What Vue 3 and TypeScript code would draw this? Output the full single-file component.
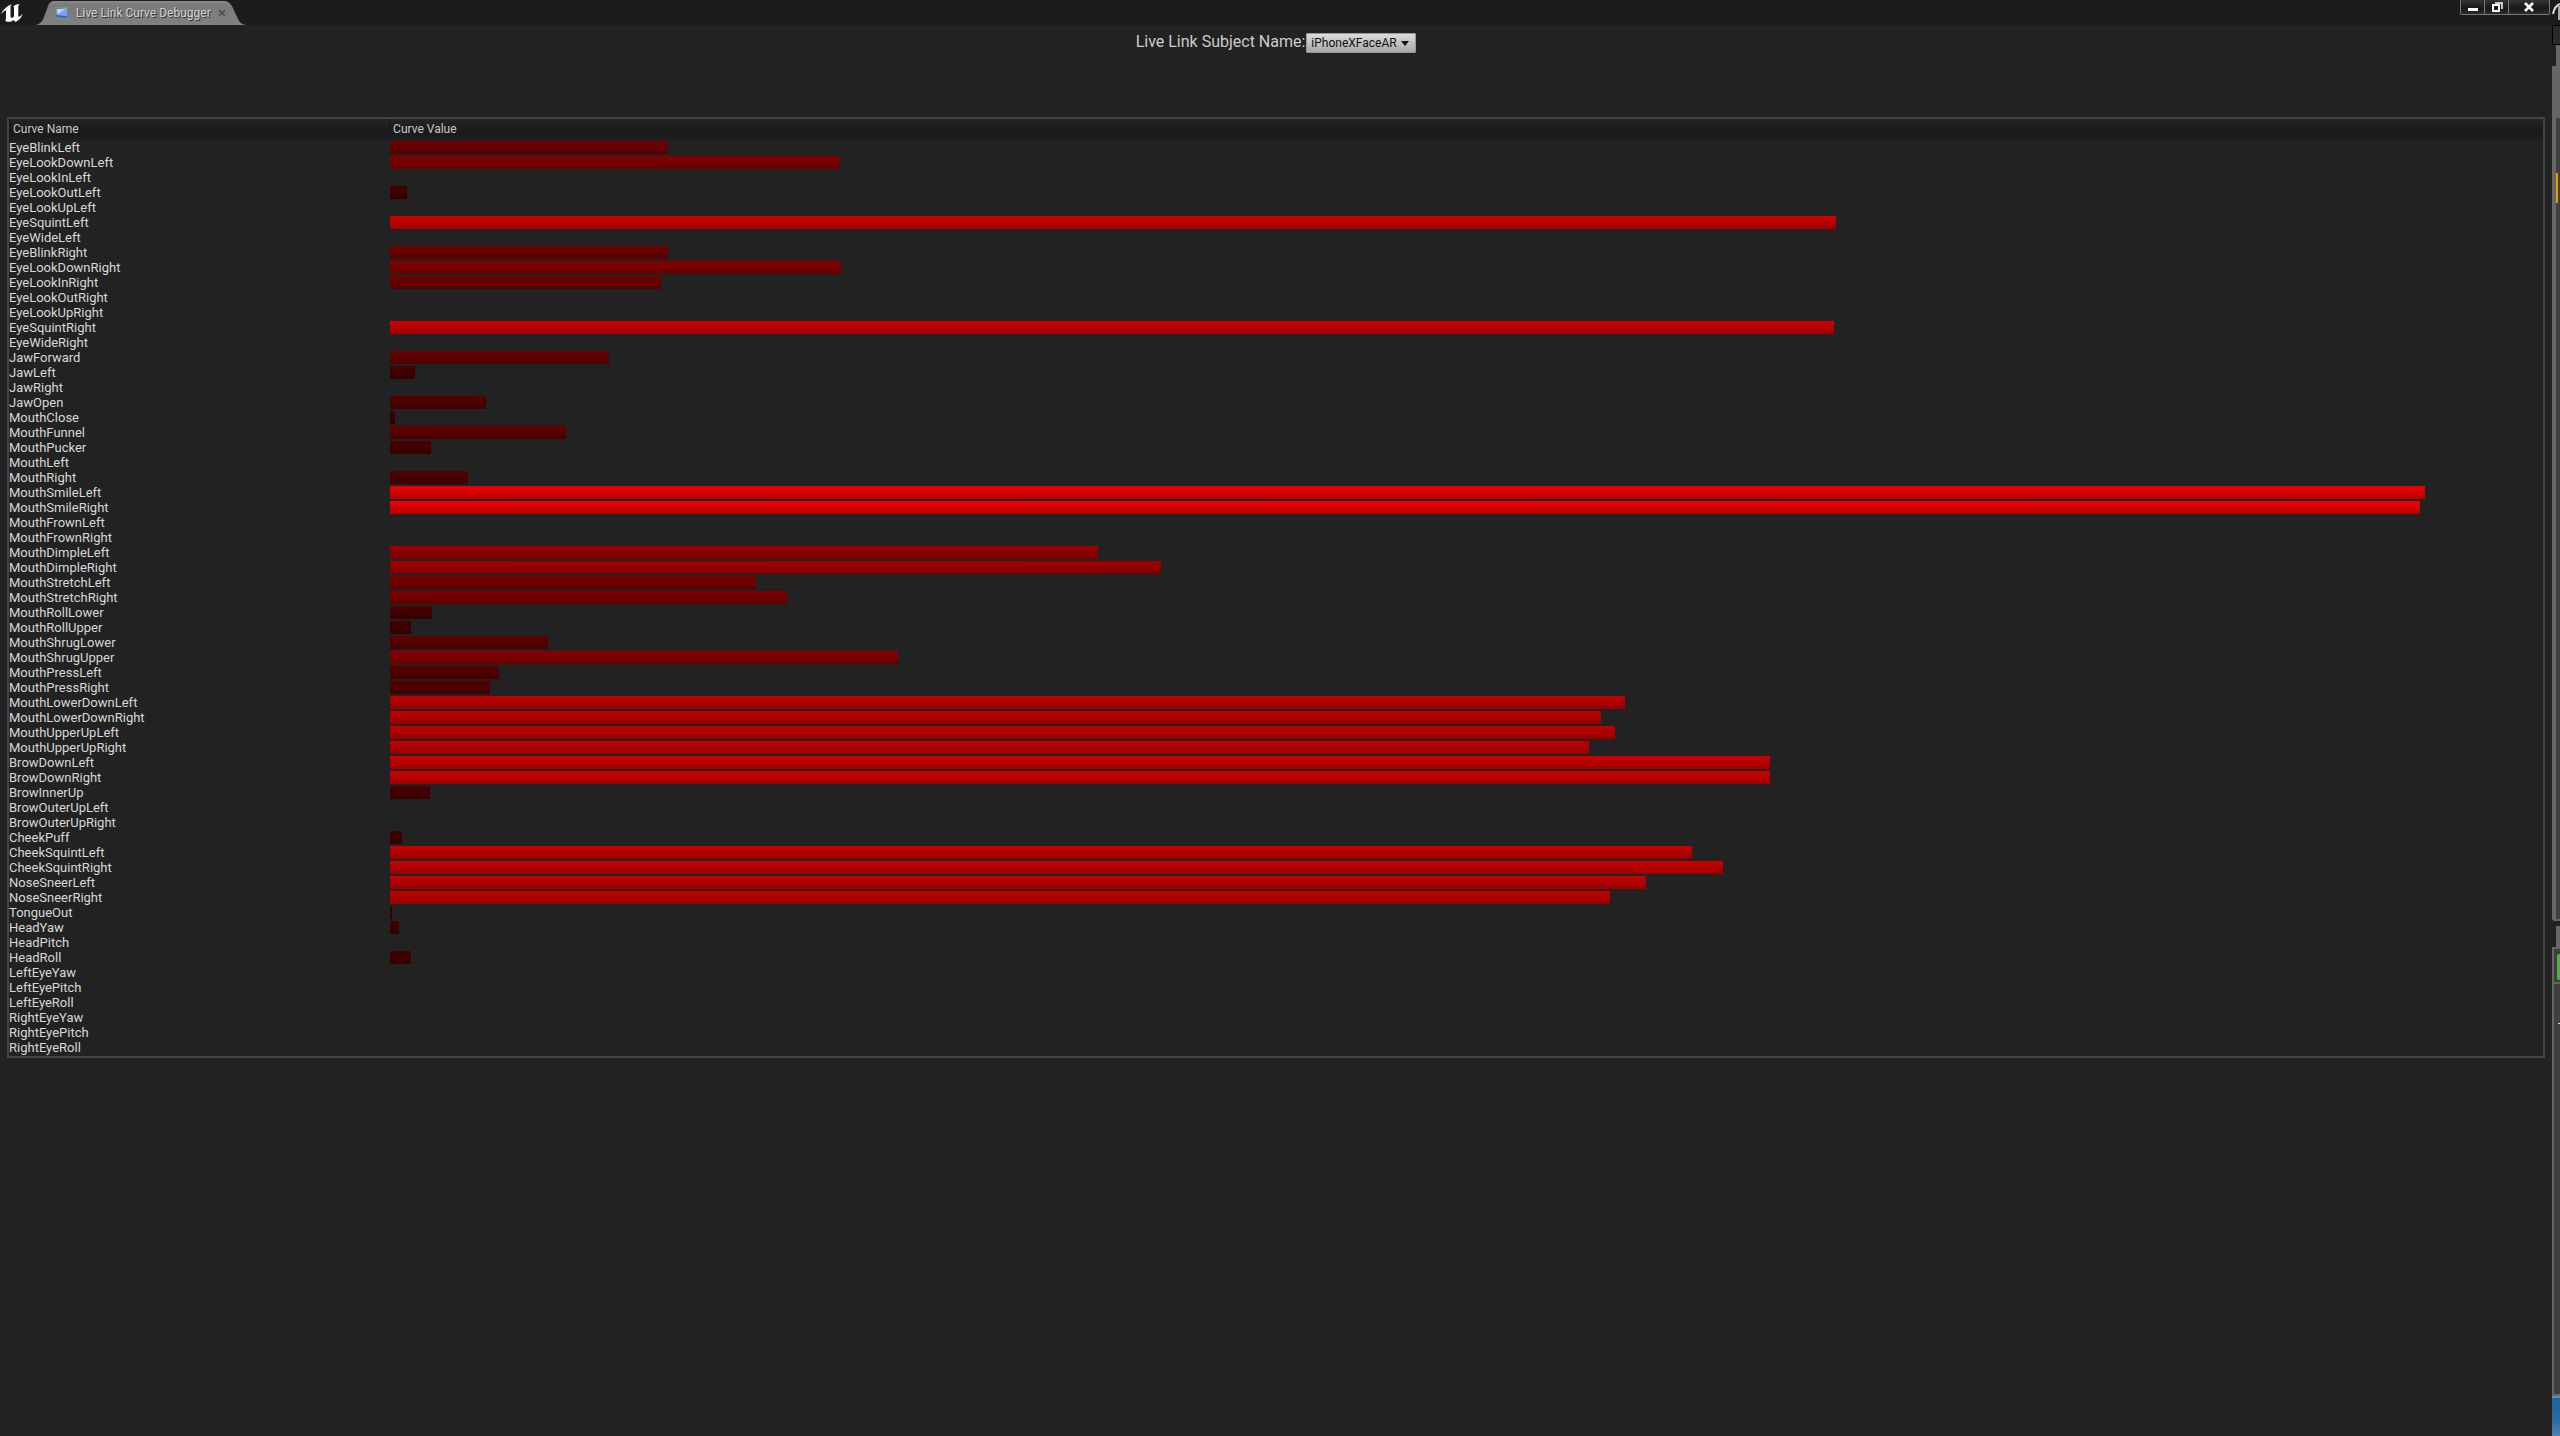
<script setup lang="ts">
import { ref } from 'vue'

interface Curve {
  name: string
  value: number
}

const subjects: string[] = ['iPhoneXFaceAR']
const subject = ref<string>(subjects[0])

const curves: Curve[] = [
  { name: 'EyeBlinkLeft', value: 0.1291 },
  { name: 'EyeLookDownLeft', value: 0.209 },
  { name: 'EyeLookInLeft', value: 0 },
  { name: 'EyeLookOutLeft', value: 0.0079 },
  { name: 'EyeLookUpLeft', value: 0 },
  { name: 'EyeSquintLeft', value: 0.6716 },
  { name: 'EyeWideLeft', value: 0 },
  { name: 'EyeBlinkRight', value: 0.1291 },
  { name: 'EyeLookDownRight', value: 0.2095 },
  { name: 'EyeLookInRight', value: 0.1259 },
  { name: 'EyeLookOutRight', value: 0 },
  { name: 'EyeLookUpRight', value: 0 },
  { name: 'EyeSquintRight', value: 0.6707 },
  { name: 'EyeWideRight', value: 0 },
  { name: 'JawForward', value: 0.1017 },
  { name: 'JawLeft', value: 0.0116 },
  { name: 'JawRight', value: 0 },
  { name: 'JawOpen', value: 0.0446 },
  { name: 'MouthClose', value: 0.0023 },
  { name: 'MouthFunnel', value: 0.0815 },
  { name: 'MouthPucker', value: 0.019 },
  { name: 'MouthLeft', value: 0 },
  { name: 'MouthRight', value: 0.0362 },
  { name: 'MouthSmileLeft', value: 0.9452 },
  { name: 'MouthSmileRight', value: 0.9429 },
  { name: 'MouthFrownLeft', value: 0 },
  { name: 'MouthFrownRight', value: 0 },
  { name: 'MouthDimpleLeft', value: 0.3286 },
  { name: 'MouthDimpleRight', value: 0.3579 },
  { name: 'MouthStretchLeft', value: 0.17 },
  { name: 'MouthStretchRight', value: 0.1844 },
  { name: 'MouthRollLower', value: 0.0195 },
  { name: 'MouthRollUpper', value: 0.0098 },
  { name: 'MouthShrugLower', value: 0.0734 },
  { name: 'MouthShrugUpper', value: 0.236 },
  { name: 'MouthPressLeft', value: 0.0508 },
  { name: 'MouthPressRight', value: 0.0464 },
  { name: 'MouthLowerDownLeft', value: 0.5736 },
  { name: 'MouthLowerDownRight', value: 0.5625 },
  { name: 'MouthUpperUpLeft', value: 0.569 },
  { name: 'MouthUpperUpRight', value: 0.5569 },
  { name: 'BrowDownLeft', value: 0.641 },
  { name: 'BrowDownRight', value: 0.641 },
  { name: 'BrowInnerUp', value: 0.0186 },
  { name: 'BrowOuterUpLeft', value: 0 },
  { name: 'BrowOuterUpRight', value: 0 },
  { name: 'CheekPuff', value: 0.0053 },
  { name: 'CheekSquintLeft', value: 0.6047 },
  { name: 'CheekSquintRight', value: 0.6191 },
  { name: 'NoseSneerLeft', value: 0.5834 },
  { name: 'NoseSneerRight', value: 0.5667 },
  { name: 'TongueOut', value: 0.0009 },
  { name: 'HeadYaw', value: 0.0042 },
  { name: 'HeadPitch', value: 0 },
  { name: 'HeadRoll', value: 0.0098 },
  { name: 'LeftEyeYaw', value: 0 },
  { name: 'LeftEyePitch', value: 0 },
  { name: 'LeftEyeRoll', value: 0 },
  { name: 'RightEyeYaw', value: 0 },
  { name: 'RightEyePitch', value: 0 },
  { name: 'RightEyeRoll', value: 0 },
]

// The red channel rises linearly in light, so it is gamma encoded here.
function barStyle(value: number) {
  const linear = 0.05 + 0.88 * value
  const red = Math.round(255 * (1.055 * Math.pow(linear, 1 / 2.4) - 0.055))
  return { width: `${value * 100}%`, backgroundColor: `rgb(${red}, 0, 0)` }
}
</script>

<template>
  <div class="desktop">
    <div class="window">
      <header class="titlebar">
        <svg class="logo" viewBox="0 0 24 24" aria-hidden="true">
          <path fill="#fff" d="M1 14.500C3 9.500 6.500 6 12 4C10.500 5.500 10.500 6 10.500 7V16.500C10.500 18 12 18.500 14 16.500V7.500C14 6.800 13.300 6.500 12.800 7C14.500 5 17 4.200 20 4C18.700 4.800 18.300 5.500 18.300 6.800V16C18.300 17.300 20 17 22.800 13.500C21.500 17.500 19 20.500 15.500 22L13.500 20C11.500 21.800 9 22.300 6.500 21.500C4.500 21 6 19.500 6 18V11.200C6 9.500 4 10.500 1 14.500Z" />
        </svg>
        <div class="tab">
          <svg class="tab-shape" viewBox="0 0 210 24" preserveAspectRatio="none" aria-hidden="true">
            <defs>
              <linearGradient id="tabFill" x1="0" y1="0" x2="0" y2="1">
                <stop offset="0" stop-color="#8a8a8a" />
                <stop offset="0.15" stop-color="#7b7b7b" />
                <stop offset="1" stop-color="#808080" />
              </linearGradient>
            </defs>
            <path fill="url(#tabFill)" d="M0 24C4 23 6 21 8 16L12 5C13 2 15 0 19 0H188C192 0 194 2 196 5L202 18C204 22 206 23 210 24Z" />
          </svg>
          <svg class="tab-icon" viewBox="0 0 16 14" aria-hidden="true">
            <path d="M1 1.500H15M1 12.500H15" stroke="#52b152" stroke-width="1" />
            <path fill="#7fa2f4" d="M2 3L13 2V11L3 10Z" />
            <path fill="#c8d8ff" d="M3 3.500L11 3L4 8Z" />
            <path fill="#3f62c8" d="M2 9L13 10V12L3 11Z" />
          </svg>
          <span class="tab-title">Live Link Curve Debugger</span>
          <button class="tab-close" type="button" aria-label="Close tab">
            <svg viewBox="0 0 8 8"><path d="M1 1L7 7M7 1L1 7" stroke="#4c4c4c" stroke-width="1.500" /></svg>
          </button>
        </div>
        <div class="window-buttons">
          <button class="small" type="button" aria-label="Minimize">
            <svg viewBox="0 0 14 14"><rect x="2" y="8" width="10" height="3" fill="#fff" /></svg>
          </button>
          <button class="small" type="button" aria-label="Restore">
            <svg viewBox="0 0 14 14" fill="none" stroke="#fff">
              <path d="M5 3H12V9" stroke-width="1.500" />
              <rect x="3" y="5" width="6" height="6" stroke-width="2" />
            </svg>
          </button>
          <button class="large" type="button" aria-label="Close">
            <svg viewBox="0 0 14 14"><path d="M3 3L11 11M11 3L3 11" stroke="#fff" stroke-width="2.500" /></svg>
          </button>
        </div>
      </header>

      <div class="subject">
        <label for="subject">Live Link Subject Name:</label>
        <span class="combo">
          <select id="subject" v-model="subject">
            <option v-for="name in subjects" :key="name" :value="name">{{ name }}</option>
          </select>
          <svg class="arrow" viewBox="0 0 8 5" aria-hidden="true"><path d="M0 0H8L4 5Z" fill="#111" /></svg>
        </span>
      </div>

      <main class="panel">
        <table>
          <colgroup>
            <col class="name-col" />
            <col />
          </colgroup>
          <thead>
            <tr>
              <th scope="col">Curve Name</th>
              <th scope="col">Curve Value</th>
            </tr>
          </thead>
          <tbody>
            <tr v-for="curve in curves" :key="curve.name">
              <td class="name">{{ curve.name }}</td>
              <td class="value">
                <div v-if="curve.value > 0" class="bar" :style="barStyle(curve.value)"></div>
              </td>
            </tr>
          </tbody>
        </table>
      </main>
    </div>

    <aside class="behind" aria-hidden="true">
      <div class="behind-title">
        <svg viewBox="0 0 8 25"><path d="M1 14C2 9 5 5 8 4" fill="none" stroke="#ddd" stroke-width="2" /><path d="M7 6V20" stroke="#ddd" stroke-width="1.500" /></svg>
      </div>
      <div class="behind-menu"></div>
      <div class="behind-tab"></div>
      <div class="behind-toolbar"></div>
      <div class="behind-view"><i class="marker"></i></div>
      <div class="behind-gap"></div>
      <div class="behind-tab"></div>
      <div class="behind-action"><i class="add"></i></div>
      <div class="behind-list"><i class="tick"></i></div>
      <div class="behind-desktop"></div>
    </aside>
  </div>
</template>

<style>
html,
body {
  background: #222;
}
</style>

<style scoped>
.desktop {
  display: flex;
  min-height: 100vh;
  background: #222;
  color: #d8d8d8;
  font: 12px/15px Roboto, "Liberation Sans", sans-serif;
}

.window {
  flex: 1;
  min-width: 0;
}

button {
  padding: 0;
  border: 0;
  background: none;
}

.titlebar {
  display: flex;
  height: 25px;
  background: #1b1b1b;
}

.logo {
  width: 24px;
  height: 24px;
}

.tab {
  position: relative;
  display: flex;
  align-items: center;
  width: 210px;
  height: 24px;
  margin: 1px 0 0 12px;
  padding-left: 18px;
  box-sizing: border-box;
}

.tab-shape {
  position: absolute;
  inset: 0;
  width: 100%;
  height: 100%;
}

.tab-icon {
  position: relative;
  width: 16px;
  height: 14px;
}

.tab-title {
  position: relative;
  margin-left: 6px;
  color: #d2d2d2;
  text-shadow: 1px 1px 0 #333;
  white-space: nowrap;
}

.tab-close {
  position: relative;
  display: flex;
  margin-left: 7px;
}

.tab-close svg {
  width: 8px;
  height: 8px;
}

.window-buttons {
  display: flex;
  height: 15px;
  margin: 0 2px 0 auto;
  box-sizing: border-box;
  border: 1px solid #777;
  border-top: 0;
  border-radius: 0 0 2px 2px;
  background: linear-gradient(#333, #181818 60%, #2c2c2c);
}

.window-buttons button {
  display: flex;
  justify-content: center;
}

.window-buttons svg {
  width: 14px;
  height: 14px;
}

.small {
  width: 24px;
  border-right: 1px solid #777;
}

.large {
  width: 40px;
}

.subject {
  display: flex;
  align-items: center;
  justify-content: center;
  gap: 1px;
  height: 20px;
  margin-top: 8px;
}

.subject label {
  color: #ccc;
  font-size: 16px;
  line-height: 20px;
  margin-bottom: 2px;
}

.combo {
  position: relative;
  display: flex;
}

.combo select {
  appearance: none;
  width: 110px;
  height: 20px;
  padding: 0 0 0 4px;
  border: 1px solid #999;
  border-radius: 1px;
  background: linear-gradient(#dcdcdc, #a8a8a8);
  color: #111;
  font: inherit;
}

.arrow {
  position: absolute;
  top: 8px;
  right: 7px;
  width: 8px;
  height: 5px;
  pointer-events: none;
}

.panel {
  margin: 64px 7px 0;
  border: 2px solid #444;
}

table {
  width: 100%;
  table-layout: fixed;
  border-collapse: separate;
  border-spacing: 0;
}

.name-col {
  width: 15%;
}

th {
  height: 22px;
  padding: 0 4px 1px;
  box-sizing: border-box;
  background: linear-gradient(#242424, #191919 60%, #1f1f1f);
  box-shadow: inset 1px 0 #161616;
  color: #c8c8c8;
  font-weight: 400;
  text-align: left;
}

td {
  height: 15px;
  padding: 0;
  vertical-align: top;
}

.name {
  font-size: 13px;
  line-height: 13px;
  white-space: nowrap;
}

.value {
  padding-left: 1px;
}

.bar {
  height: 13px;
  background-image: linear-gradient(transparent, rgba(0, 0, 0, 0.25));
}

.behind {
  display: flex;
  flex-direction: column;
  width: 8px;
  background: #222;
}

.behind-title {
  height: 25px;
  background: #1b1b1b;
}

.behind-title svg {
  display: block;
  width: 8px;
  height: 25px;
}

.behind-menu {
  height: 20px;
  box-sizing: border-box;
  border: solid #000;
  border-width: 1px 0 1px 1px;
  background: #2a2a2a;
}

.behind-tab {
  height: 21px;
  margin-left: 4px;
  background: #666;
}

.behind-toolbar {
  height: 52px;
  background: #666;
}

.behind-view {
  flex: 804;
  box-sizing: border-box;
  border: solid #666;
  border-width: 0 0 2px 4px;
  border-bottom-left-radius: 3px;
  background: #403f3e;
}

.marker {
  display: block;
  width: 2px;
  height: 30px;
  margin-top: 55px;
  background: #e0a000;
}

.behind-gap {
  height: 5px;
}

.behind-action {
  height: 37px;
  padding: 5px 0 0 3px;
  box-sizing: border-box;
  border: solid #666;
  border-width: 2px 0 2px 2px;
  background: #403f3e;
}

.add {
  display: block;
  height: 26px;
  border-radius: 2px 0 0 2px;
  background: #4fae4f;
}

.behind-list {
  flex: 411;
  box-sizing: border-box;
  border: solid #666;
  border-width: 0 0 2px 2px;
  background: #403f3e;
}

.tick {
  display: block;
  height: 1px;
  margin: 39px 0 0 4px;
  background: #ddd;
}

.behind-desktop {
  height: 40px;
  box-sizing: border-box;
  border-top: 2px solid #5f8fae;
  background: linear-gradient(#1e6296, #2a6ca4 60%, #5283b4);
}
</style>
